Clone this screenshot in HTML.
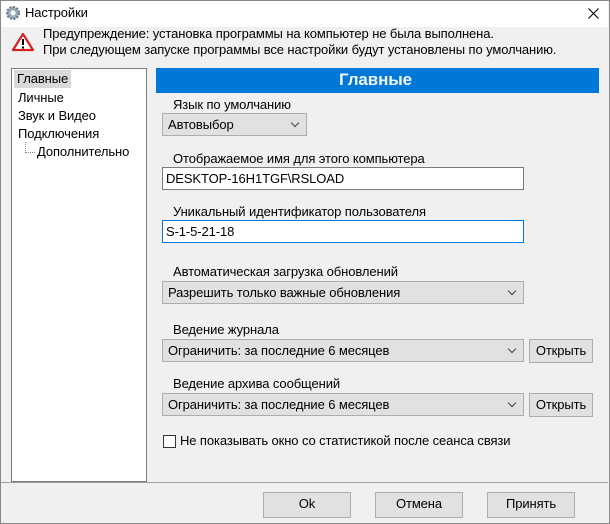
<!DOCTYPE html><html><head><meta charset="utf-8"><style>
*{box-sizing:border-box;margin:0;padding:0}
body{width:610px;height:524px;overflow:hidden;background:#f0f0f0;font:13px "Liberation Sans",sans-serif;color:#000;position:relative;letter-spacing:-0.1px}
.a{position:absolute;white-space:nowrap}
.win{position:absolute;left:0;top:0;width:610px;height:524px;border:1px solid #888}
.title{position:absolute;left:1px;top:1px;width:607px;height:26px;background:#fff}
.box{position:absolute;background:#fff;border:1px solid #7a7a7a}
.cb{position:absolute;background:#e1e1e1;border:1px solid #adadad;height:23px;padding:3px 5px}
.cb:after{content:"";position:absolute;right:8px;top:6px;width:5px;height:5px;border-right:1px solid #444;border-bottom:1px solid #444;transform:rotate(45deg)}
.ed{position:absolute;background:#fff;border:1px solid #7a7a7a;height:23px;padding:3px 3px}
.btn{position:absolute;background:#e1e1e1;border:1px solid #adadad;text-align:center;line-height:22px}
</style></head><body>
<div class="win"></div>
<div class="title"></div>
<svg class="a" style="left:5px;top:5px" width="16" height="16" viewBox="0 0 16 16"><circle cx="8" cy="8" r="6" fill="#9ab" stroke="#678" stroke-width="2" stroke-dasharray="2 1.5"/><circle cx="8" cy="8" r="2.5" fill="#fff"/></svg>
<div class="a" style="left:25px;top:5px">Настройки</div>
<svg class="a" style="left:588px;top:8px" width="11" height="11" viewBox="0 0 11 11"><path d="M0.5 0.5L10.5 10.5M10.5 0.5L0.5 10.5" stroke="#000" stroke-width="1.1"/></svg>
<svg class="a" style="left:11px;top:32px" width="24" height="20" viewBox="0 0 24 20"><path d="M12 2 L22 18 L2 18 Z" fill="#fff" stroke="#d42020" stroke-width="2.2" stroke-linejoin="round"/><rect x="11" y="7" width="2" height="6" fill="#000"/><rect x="11" y="14.5" width="2" height="2" fill="#000"/></svg>
<div class="a" style="left:43px;top:26px">Предупреждение: установка программы на компьютер не была выполнена.</div>
<div class="a" style="left:43px;top:42px">При следующем запуске программы все настройки будут установлены по умолчанию.</div>
<div class="box" style="left:11px;top:68px;width:136px;height:414px"></div>
<div class="a" style="left:14px;top:70px;background:#d9d9d9;padding:1px 3px;height:18px">Главные</div>
<div class="a" style="left:18px;top:90px">Личные</div>
<div class="a" style="left:18px;top:108px">Звук и Видео</div>
<div class="a" style="left:18px;top:126px">Подключения</div>
<div class="a" style="left:25px;top:142px;width:1px;height:11px;border-left:1px dotted #888"></div>
<div class="a" style="left:25px;top:152px;width:10px;border-top:1px dotted #888"></div>
<div class="a" style="left:37px;top:144px">Дополнительно</div>
<div class="a" style="left:156px;top:68px;width:443px;height:25px;background:#0078d7"></div>
<div class="a" style="left:339px;top:70px;color:#f0f4ff;font-weight:bold;font-size:17px">Главные</div>
<div class="a" style="left:173px;top:97px">Язык по умолчанию</div>
<div class="cb" style="left:162px;top:113px;width:145px">Автовыбор</div>
<div class="a" style="left:173px;top:151px">Отображаемое имя для этого компьютера</div>
<div class="ed" style="left:162px;top:167px;width:362px">DESKTOP-16H1TGF\RSLOAD</div>
<div class="a" style="left:173px;top:204px">Уникальный идентификатор пользователя</div>
<div class="ed" style="left:162px;top:220px;width:362px;border-color:#0078d7">S-1-5-21-18</div>
<div class="a" style="left:173px;top:264px">Автоматическая загрузка обновлений</div>
<div class="cb" style="left:162px;top:281px;width:362px">Разрешить только важные обновления</div>
<div class="a" style="left:173px;top:322px">Ведение журнала</div>
<div class="cb" style="left:162px;top:339px;width:362px">Ограничить: за последние 6 месяцев</div>
<div class="btn" style="left:529px;top:339px;width:64px;height:24px">Открыть</div>
<div class="a" style="left:173px;top:376px">Ведение архива сообщений</div>
<div class="cb" style="left:162px;top:393px;width:362px">Ограничить: за последние 6 месяцев</div>
<div class="btn" style="left:529px;top:393px;width:64px;height:24px">Открыть</div>
<div class="a" style="left:163px;top:435px;width:13px;height:13px;background:#fff;border:1px solid #333"></div>
<div class="a" style="left:180px;top:433px">Не показывать окно со статистикой после сеанса связи</div>
<div class="a" style="left:1px;top:482px;width:607px;height:1px;background:#a0a0a0"></div>
<div class="btn" style="left:263px;top:492px;width:88px;height:26px">Ok</div>
<div class="btn" style="left:375px;top:492px;width:88px;height:26px">Отмена</div>
<div class="btn" style="left:487px;top:492px;width:88px;height:26px">Принять</div>
</body></html>
